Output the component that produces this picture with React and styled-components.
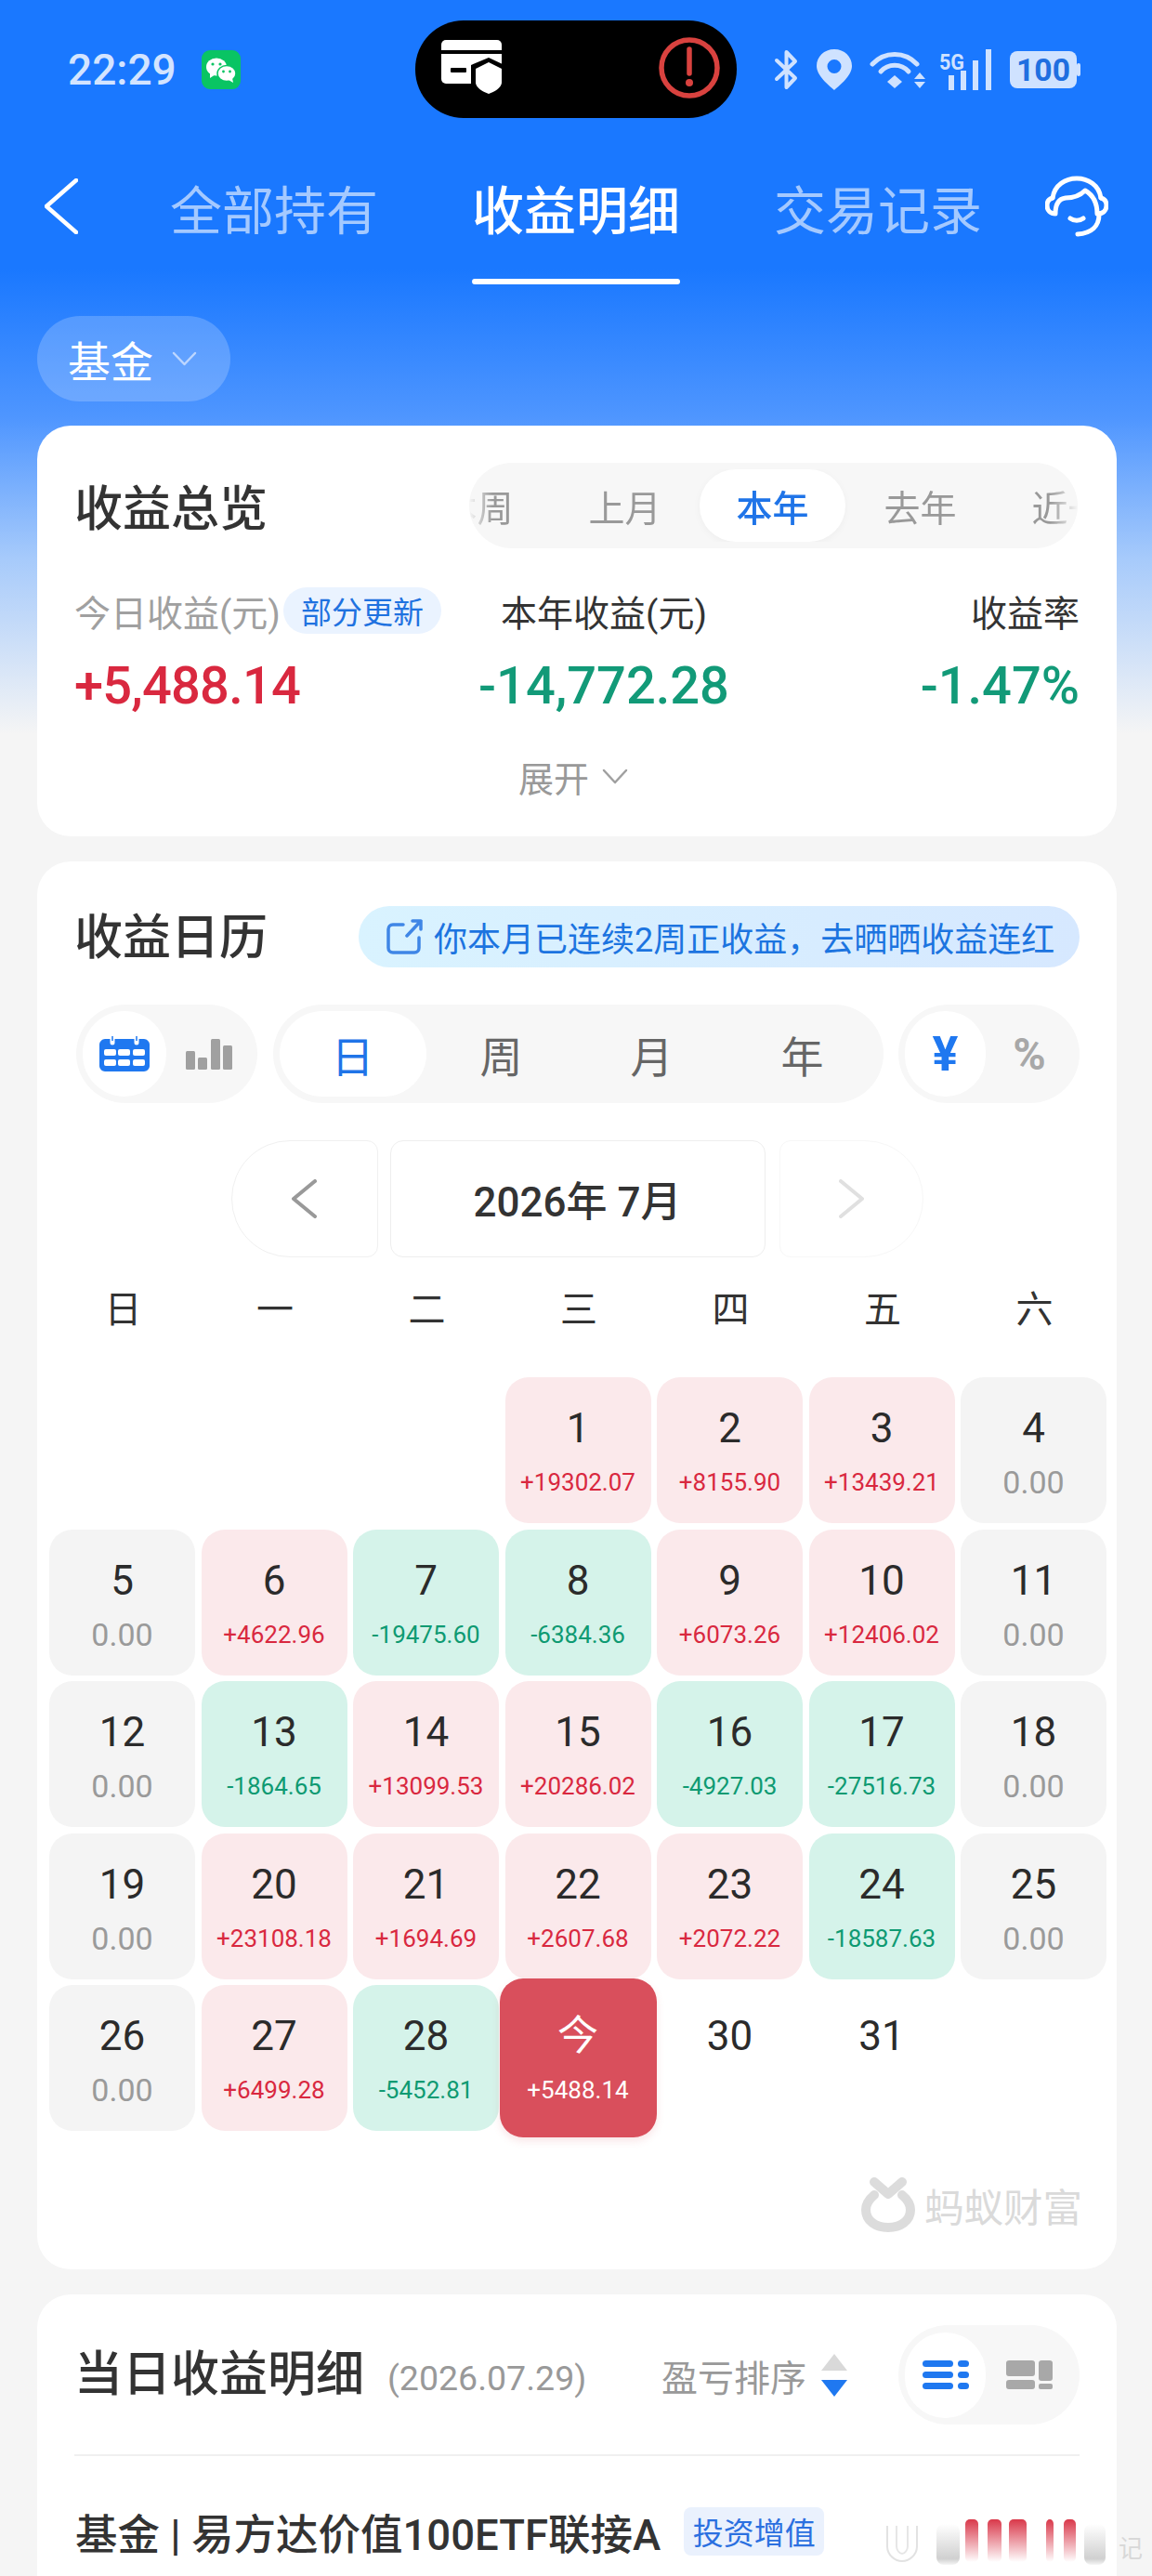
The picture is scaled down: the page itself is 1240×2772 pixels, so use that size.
import React from 'react'
import styled, { createGlobalStyle } from 'styled-components'

const GlobalStyle = createGlobalStyle`
  html, body { margin: 0; padding: 0; }
  body { font-family: Roboto, "Noto Sans CJK SC", sans-serif; color: #333; }
  * { box-sizing: border-box; }
`

const Page = styled.div`
  position: relative;
  display: flex;
  flex-direction: column;
  width: 1240px;
  height: 2772px;
  overflow: hidden;
  background: linear-gradient(180deg, #1a78ff 0, #1a78ff 290px, #4f96ff 450px, #a6cafb 600px, #f5f5f5 790px);
`

/* status bar */
const StatusBar = styled.div`
  display: grid;
  grid-template-columns: 447px 346px 1fr;
  align-items: center;
  height: 105px;
  margin-top: 22px;
`
const StatusLeft = styled.div`
  display: flex;
  align-items: center;
  gap: 27px;
  padding-left: 73px;
`
const Clock = styled.span`
  font-size: 46px;
  font-weight: 500;
  color: #d3e4ff;
  line-height: 1;
`
const Island = styled.div`
  display: flex;
  align-items: center;
  justify-content: space-between;
  height: 105px;
  padding: 0 18px 4px 28px;
  background: #000;
  border-radius: 52px;
`
const StatusRight = styled.div`
  display: flex;
  align-items: center;
  padding-left: 40px;
`
const StatusIcon = styled.svg`
  display: block;
  flex: none;
  margin-right: ${p => p.$gap || 0}px;
`

/* tabs */
const TabBar = styled.div`
  display: flex;
  align-items: stretch;
  height: 190px;
  padding-left: 48px;
`
const IconSlot = styled.div`
  display: flex;
  align-items: center;
  flex: none;
  width: ${p => p.$w}px;
  margin-left: ${p => p.$left || 0}px;
`
const TabRow = styled.div`
  display: flex;
  gap: 101px;
  margin-left: 99px;
`
const Tab = styled.div`
  position: relative;
  display: flex;
  align-items: center;
  font-size: 56px;
  font-weight: ${p => (p.$active ? 500 : 400)};
  color: ${p => (p.$active ? '#fff' : '#a4c9ff')};
  ${p => p.$active && `
    &::after {
      content: '';
      position: absolute;
      left: 0;
      right: 0;
      bottom: 11px;
      height: 6px;
      border-radius: 3px;
      background: #fff;
    }
  `}
`
const FilterPill = styled.div`
  display: flex;
  align-items: center;
  gap: 20px;
  width: 208px;
  height: 92px;
  margin: 23px 0 0 40px;
  padding-left: 33px;
  border-radius: 46px;
  background: rgba(255, 255, 255, 0.2);
  color: #fff;
  font-size: 46px;
`

/* cards */
const Card = styled.section`
  flex: ${p => (p.$fill ? 1 : 'none')};
  width: 1162px;
  margin: ${p => p.$top}px 0 0 40px;
  padding: ${p => p.$pad};
  background: #fff;
  border-radius: ${p => (p.$fill ? '36px 36px 0 0' : '36px')};
`
const CardHead = styled.div`
  display: flex;
  align-items: center;
  justify-content: space-between;
`
const CardTitle = styled.h2`
  margin: ${p => p.$drop || 0}px 0 0;
  font-size: 52px;
  line-height: 60px;
  font-weight: 500;
  color: #333;
  white-space: nowrap;
`

/* period slider */
const Period = styled.div`
  width: 655px;
  height: 92px;
  padding: 7px 0;
  background: #f7f7f7;
  border-radius: 46px;
  overflow: hidden;
  margin-right: 2px;
`
const PeriodTrack = styled.div`
  display: flex;
  margin-left: -71px;
  mask-image: linear-gradient(90deg, transparent 71px, #000 96px, #000 696px, transparent 726px);
`
const PeriodItem = styled.div`
  flex: none;
  display: flex;
  align-items: center;
  justify-content: center;
  width: ${p => p.$w || 157}px;
  height: 78px;
  margin: 0 1px;
  padding-left: ${p => p.$pl || 0}px;
  font-size: 39px;
  white-space: nowrap;
  color: ${p => (p.$active ? '#1f74e8' : '#999')};
  font-weight: ${p => (p.$active ? 500 : 400)};
  background: ${p => (p.$active ? '#fff' : 'transparent')};
  border-radius: 39px;
  ${p => p.$active && 'box-shadow: 0 2px 8px rgba(0, 0, 0, 0.04);'}
`

/* stats */
const Stats = styled.div`
  display: grid;
  grid-template-columns: 435px 270px 1fr;
  grid-template-rows: 50px 60px;
  row-gap: 26px;
  margin-top: 42px;
`
const StatLabel = styled.div`
  display: flex;
  align-items: center;
  justify-content: ${p => p.$align || 'flex-start'};
  font-size: 39px;
  color: ${p => p.$color || '#333'};
  white-space: nowrap;
`
const UpdateTag = styled.span`
  display: inline-flex;
  align-items: center;
  height: 50px;
  margin-left: 3px;
  padding: 0 19px;
  border-radius: 25px;
  background: #eaf3ff;
  color: #1f72e0;
  font-size: 33px;
`
const StatValue = styled.div`
  display: flex;
  align-items: center;
  justify-content: ${p => p.$align || 'flex-start'};
  font-size: 56px;
  font-weight: 500;
  letter-spacing: ${p => (p.$up ? '-0.8px' : '0')};
  color: ${p => (p.$up ? '#d9283f' : '#129a78')};
  white-space: nowrap;
`
const Expand = styled.div`
  display: flex;
  align-items: center;
  justify-content: center;
  gap: 14px;
  height: 50px;
  margin-top: 42px;
  padding-right: 8px;
  font-size: 38px;
  color: #999;
`

/* calendar card */
const ShareBanner = styled.div`
  display: flex;
  align-items: center;
  gap: 11px;
  width: 776px;
  height: 66px;
  padding-left: 30px;
  border-radius: 33px;
  background: linear-gradient(90deg, #d9f3ff, #d6e8ff);
  color: #1c74e0;
  font-size: 36px;
  white-space: nowrap;
  svg { flex: none; }
`
const Toolbar = styled.div`
  display: flex;
  justify-content: space-between;
  margin-top: 40px;
  padding-left: 2px;
`
const Toggle = styled.div`
  display: flex;
  align-items: center;
  flex: none;
  width: ${p => p.$w}px;
  height: ${p => p.$h || 106}px;
  padding: 0 7px;
  background: #f7f7f7;
  border-radius: 53px;
`
const ToggleItem = styled.div`
  display: flex;
  align-items: center;
  justify-content: center;
  flex: none;
  width: ${p => p.$w}px;
  height: 92px;
  font-size: ${p => p.$size || 46}px;
  font-weight: ${p => p.$weight || 400};
  color: ${p => p.$color || '#666'};
  background: ${p => (p.$active ? '#fff' : 'transparent')};
  border-radius: 46px;
`
const MonthNav = styled.div`
  display: flex;
  justify-content: center;
  margin-top: 40px;
`
const NavBtn = styled.div`
  display: flex;
  align-items: center;
  justify-content: center;
  width: ${p => p.$w}px;
  height: 126px;
  margin-left: ${p => p.$left || 0}px;
  border: 1.5px solid ${p => p.$line || '#eee'};
  border-radius: ${p => p.$radius};
  font-size: 44px;
  font-weight: 500;
  color: #333;
`
const WeekRow = styled.div`
  display: grid;
  grid-template-columns: repeat(7, 157px);
  column-gap: 6.5px;
  height: 40px;
  margin: 37px 0 0 -26px;
`
const WeekDay = styled.div`
  text-align: center;
  font-size: 40px;
  line-height: 40px;
  color: #333;
`
const DayGrid = styled.div`
  display: grid;
  grid-template-columns: repeat(7, 157px);
  grid-auto-rows: 157px;
  gap: 6.5px;
  margin: 52px 0 0 -27px;
`
const tones = {
  up: { bg: '#fbe9eb', fg: '#d9283f' },
  down: { bg: '#d5f3ea', fg: '#0e9a72' },
  zero: { bg: '#f4f4f4', fg: '#9a9a9a' },
  none: { bg: 'transparent', fg: '#9a9a9a' },
}
const DayCell = styled.div`
  display: flex;
  flex-direction: column;
  align-items: center;
  padding-top: 30px;
  border-radius: 25px;
  background: ${p => tones[p.$tone].bg};
`
const TodayCell = styled(DayCell)`
  margin: -7px -6px;
  padding-top: 37px;
  background: #d94f5c;
  box-shadow: 0 4px 8px rgba(217, 79, 92, 0.15);
`
const DayNum = styled.div`
  font-size: 44px;
  line-height: 50px;
  font-weight: 400;
  color: ${p => (p.$today ? '#fff' : '#2b2b2b')};
`
const DayAmount = styled.div`
  margin-top: 15px;
  font-size: ${p => (p.$zero ? 34 : 26)}px;
  line-height: 36px;
  white-space: nowrap;
  color: ${p => (p.$today ? '#fff' : tones[p.$tone].fg)};
`
const BrandRow = styled.div`
  display: flex;
  align-items: center;
  justify-content: flex-end;
  gap: 10px;
  height: 59px;
  margin: 50px -3px 0 0;
`
const BrandText = styled.span`
  font-size: 42.5px;
  color: #dadada;
  white-space: nowrap;
`

/* detail card */
const DetailHead = styled.div`
  display: flex;
  align-items: center;
`
const DetailDate = styled.span`
  margin: 6px 0 0 25px;
  font-size: 37.5px;
  color: #999;
`
const SortGroup = styled.div`
  display: flex;
  align-items: center;
  gap: 16px;
  margin: 0 55px 0 auto;
  font-size: 39px;
  color: #999;
  white-space: nowrap;
`
const Divider = styled.div`
  height: 2px;
  margin-top: 32px;
  background: #f0f0f0;
`
const FundRow = styled.div`
  display: flex;
  align-items: center;
  gap: 25px;
  margin-top: 48px;
  padding-left: 1px;
`
const FundName = styled.span`
  font-size: 45.5px;
  font-weight: 500;
  color: #333;
  white-space: nowrap;
`
const FundTag = styled.span`
  display: inline-flex;
  align-items: center;
  justify-content: center;
  width: 151px;
  height: 52px;
  border-radius: 8px;
  background: #eaf1fd;
  color: #2b70e0;
  font-size: 33px;
`
const Watermark = styled.div`
  position: absolute;
  left: 950px;
  top: 2700px;
  width: 290px;
  height: 72px;
`
const WatermarkChar = styled.span`
  position: absolute;
  left: 254px;
  top: 28px;
  font-size: 26px;
  line-height: 30px;
  color: #d8d8d8;
`

const Chevron = ({ w, h, color, stroke = 4, dir = 'down' }) => {
  const paths = {
    down: `M2 2 L${w / 2} ${h - 2} L${w - 2} 2`,
    left: `M${w - 2} 2 L2 ${h / 2} L${w - 2} ${h - 2}`,
    right: `M2 2 L${w - 2} ${h / 2} L2 ${h - 2}`,
  }
  return (
    <svg width={w} height={h} viewBox={`0 0 ${w} ${h}`} fill="none">
      <path d={paths[dir]} stroke={color} strokeWidth={stroke} strokeLinecap="round" strokeLinejoin="round" />
    </svg>
  )
}

const WeChatIcon = () => (
  <svg width="42" height="42" viewBox="0 0 42 42">
    <rect width="42" height="42" rx="9" fill="#09c463" />
    <ellipse cx="16" cy="18" rx="11" ry="9.5" fill="#fff" />
    <path d="M9 24 L9 30 L15 26 Z" fill="#fff" />
    <ellipse cx="27" cy="25" rx="10" ry="8.5" fill="#fff" stroke="#09c463" strokeWidth="1.5" />
    <path d="M33 30 L34 35 L29 32 Z" fill="#fff" />
    <circle cx="12" cy="15" r="1.6" fill="#09c463" />
    <circle cx="20" cy="15" r="1.6" fill="#09c463" />
    <circle cx="23.5" cy="23" r="1.4" fill="#09c463" />
    <circle cx="30.5" cy="23" r="1.4" fill="#09c463" />
  </svg>
)

const CardShieldIcon = () => (
  <svg width="68" height="60" viewBox="0 0 68 60">
    <rect x="0" y="0" width="65" height="47" rx="5" fill="#fff" />
    <rect x="0" y="11" width="65" height="4" fill="#000" />
    <rect x="10" y="30" width="17" height="5" rx="1" fill="#000" />
    <path d="M51 19 L68 27 L68 47 C68 54 58 60 51 62 C44 60 32 54 32 47 L32 27 Z" fill="#000" />
    <path d="M51 24 L65 31 L65 46 C65 51 57 56 51 58 C45 56 37 51 37 46 L37 31 Z" fill="#fff" />
  </svg>
)

const AlertIcon = () => (
  <svg width="66" height="68" viewBox="0 0 66 68">
    <circle cx="33" cy="34" r="30" fill="none" stroke="#d9423f" strokeWidth="5.5" />
    <path d="M33 14 L33 40" stroke="#d9423f" strokeWidth="5.5" strokeLinecap="round" />
    <circle cx="33" cy="50" r="4" fill="#d9423f" />
  </svg>
)

const BluetoothIcon = () => (
  <StatusIcon $gap={19} width="27" height="44" viewBox="0 0 27 44" fill="none">
    <path d="M3 12 L23 31 L13.5 41 L13.5 3 L23 13 L3 32" stroke="#cfe2ff" strokeWidth="4" strokeLinejoin="round" strokeLinecap="round" />
  </StatusIcon>
)

const PinIcon = () => (
  <StatusIcon $gap={19} width="38" height="44" viewBox="0 0 38 44">
    <path fillRule="evenodd" d="M19 0 C30 0 38 8 38 18 C38 28 26 38 19 44 C12 38 0 28 0 18 C0 8 8 0 19 0 Z M19 11 A7.5 7.5 0 1 0 19 26 A7.5 7.5 0 1 0 19 11 Z" fill="#cfe2ff" />
  </StatusIcon>
)

const WifiIcon = () => (
  <StatusIcon $gap={15} width="60" height="42" viewBox="0 0 60 42" fill="none">
    <path d="M3 15 C16 1 38 1 51 15" stroke="#cfe2ff" strokeWidth="5" strokeLinecap="round" />
    <path d="M12 23 C20 14 34 14 42 23" stroke="#cfe2ff" strokeWidth="5" strokeLinecap="round" />
    <path d="M27 27 L35 34 L27 41 L19 34 Z" fill="#cfe2ff" />
    <path d="M54 24 L60 31 L48 31 Z M48 34 L60 34 L54 41 Z" fill="#cfe2ff" />
  </StatusIcon>
)

const SignalIcon = () => (
  <StatusIcon $gap={19} width="57" height="44" viewBox="0 0 57 44">
    <text x="0" y="22" fontFamily="Roboto" fontWeight="700" fontSize="23" fill="#cfe2ff" textLength="27" lengthAdjust="spacingAndGlyphs">5G</text>
    <rect x="10" y="28" width="6" height="16" fill="#cfe2ff" />
    <rect x="23" y="23" width="6" height="21" fill="#cfe2ff" />
    <rect x="36" y="12" width="6" height="32" fill="#cfe2ff" />
    <rect x="50" y="0" width="6" height="44" fill="#cfe2ff" />
  </StatusIcon>
)

const BatteryIcon = () => (
  <StatusIcon width="76" height="40" viewBox="0 0 76 40">
    <rect x="0" y="0" width="72" height="40" rx="8" fill="#cfe2ff" />
    <rect x="72" y="13" width="4" height="14" rx="2" fill="#cfe2ff" />
    <text x="36" y="32" textAnchor="middle" fontFamily="Roboto" fontWeight="700" fontSize="33" fill="#1f6fe0" textLength="58" lengthAdjust="spacingAndGlyphs">100</text>
  </StatusIcon>
)

const HeadsetIcon = () => (
  <svg width="68" height="66" viewBox="0 0 68 66" fill="none" stroke="#fff" strokeWidth="5" strokeLinecap="round" strokeLinejoin="round">
    <path d="M8 24 C10 10 22 3 34 3 C46 3 58 10 60 24" />
    <path d="M8 24 C4 25 2 28 2 32 C2 38 6 41 11 41 C11 32 14 25 22 24 C30 24 37 22 43 16 C50 20 56 28 56 41 C62 41 66 38 66 32 C66 28 64 25 60 24" />
    <path d="M27 46 C31 49 37 49 41 46" />
    <path d="M58 42 C58 54 50 62 35 63" />
  </svg>
)

const ShareIcon = () => (
  <svg width="40" height="38" viewBox="0 0 40 38" fill="none" stroke="#3f86e6" strokeWidth="3.5" strokeLinecap="round" strokeLinejoin="round">
    <path d="M18 6 L7 6 C4 6 2 8 2 11 L2 31 C2 34 4 36 7 36 L30 36 C33 36 35 34 35 31 L35 20" />
    <path d="M22 18 L37 2 M28 2 L37 2 L37 11" />
  </svg>
)

const CalendarIcon = () => (
  <svg width="54" height="38" viewBox="0 0 54 38">
    <path d="M6 3 H48 C51 3 54 6 54 9 V32 C54 35 51 38 48 38 H6 C3 38 0 35 0 32 V9 C0 6 3 3 6 3 Z" fill="#1f78f0" />
    <path d="M14 0 V7 M40 0 V7" stroke="#fff" strokeWidth="5" strokeLinecap="round" />
    <path d="M14 0 V5 M40 0 V5" stroke="#1f78f0" strokeWidth="1.5" />
    {[5, 20, 36].map(x => (
      <g key={x}>
        <rect x={x} y="14" width="13" height="7" rx="2" fill="#fff" />
        <rect x={x} y="25" width="13" height="7" rx="2" fill="#fff" />
      </g>
    ))}
  </svg>
)

const BarsIcon = () => (
  <svg width="50" height="33" viewBox="0 0 50 33" fill="#a0a0a0">
    <rect x="0" y="13" width="10" height="20" rx="1.5" />
    <rect x="13" y="20" width="10" height="13" rx="1.5" />
    <rect x="27" y="0" width="10" height="33" rx="1.5" />
    <rect x="40" y="7" width="10" height="26" rx="1.5" />
  </svg>
)

const BrandMark = () => (
  <svg width="58" height="59" viewBox="0 0 58 59" fill="none" stroke="#dcdcdc" strokeWidth="10">
    <path d="M14 19 C8 24 5 30 5 35 C5 47 16 54 29 54 C42 54 53 47 53 35 C53 30 50 24 44 19" strokeLinecap="round" />
    <path d="M14 5 L29 18 L44 5" strokeLinecap="round" strokeLinejoin="round" />
  </svg>
)

const SortArrows = () => (
  <svg width="28" height="46" viewBox="0 0 28 46">
    <path d="M14 0 L28 18 L0 18 Z" fill="#d9d9d9" />
    <path d="M0 28 L28 28 L14 46 Z" fill="#1f78f0" />
  </svg>
)

const ListIcon = () => (
  <svg width="50" height="31" viewBox="0 0 50 31" fill="#1f78f0">
    {[0, 12, 24].map(y => (
      <g key={y}>
        <rect x="0" y={y} width="33" height="7" rx="3.5" />
        <rect x="38" y={y} width="12" height="7" rx="3.5" />
      </g>
    ))}
  </svg>
)

const BlocksIcon = () => (
  <svg width="50" height="31" viewBox="0 0 50 31" fill="#a8a8a8">
    <rect x="0" y="0" width="31" height="17" rx="3" />
    <rect x="0" y="21" width="31" height="10" rx="3" />
    <rect x="35" y="0" width="15" height="22" rx="3" />
    <rect x="35" y="25" width="15" height="6" rx="2" />
  </svg>
)

const WatermarkArt = () => {
  const red = [[89, 14], [113, 15], [136, 19], [176, 8], [195, 13]]
  const gray = [[58, 25], [217, 23]]
  return (
    <svg width="290" height="72" viewBox="0 0 290 72" fill="none">
      <defs>
        <linearGradient id="wmRed" x1="0" y1="0" x2="0" y2="1">
          <stop offset="0" stopColor="#d9384a" />
          <stop offset="1" stopColor="#d9384a" stopOpacity="0" />
        </linearGradient>
        <linearGradient id="wmGray" x1="0" y1="0" x2="0" y2="1">
          <stop offset="0" stopColor="#d0d0d0" stopOpacity="0" />
          <stop offset="0.85" stopColor="#d0d0d0" />
          <stop offset="1" stopColor="#d0d0d0" stopOpacity="0.2" />
        </linearGradient>
      </defs>
      <path d="M5 18 V40 C5 50 14 56 21 56 C28 56 37 50 37 40 V18" stroke="#e2e2e2" strokeWidth="2" />
      <path d="M15 18 V40 C15 44 18 48 21 48 C24 48 27 44 27 40 V18" stroke="#e6e6e6" strokeWidth="2" />
      {gray.map(([x, w]) => (
        <rect key={x} x={x} y="16" width={w} height="44" rx="8" fill="url(#wmGray)" />
      ))}
      {red.map(([x, w]) => (
        <rect key={x} x={x} y="11" width={w} height="46" rx="5" fill="url(#wmRed)" />
      ))}
    </svg>
  )
}

const weekDays = ['日', '一', '二', '三', '四', '五', '六']
const days = [
  null, null, null,
  [1, '+19302.07'], [2, '+8155.90'], [3, '+13439.21'], [4, '0.00'],
  [5, '0.00'], [6, '+4622.96'], [7, '-19475.60'], [8, '-6384.36'], [9, '+6073.26'], [10, '+12406.02'], [11, '0.00'],
  [12, '0.00'], [13, '-1864.65'], [14, '+13099.53'], [15, '+20286.02'], [16, '-4927.03'], [17, '-27516.73'], [18, '0.00'],
  [19, '0.00'], [20, '+23108.18'], [21, '+1694.69'], [22, '+2607.68'], [23, '+2072.22'], [24, '-18587.63'], [25, '0.00'],
  [26, '0.00'], [27, '+6499.28'], [28, '-5452.81'], ['今', '+5488.14', true], [30], [31],
]

const toneOf = amount => {
  if (!amount) return 'none'
  if (amount === '0.00') return 'zero'
  return amount[0] === '+' ? 'up' : 'down'
}

const Calendar = () => (
  <DayGrid>
    {days.map((day, i) => {
      if (!day) return <div key={i} />
      const [num, amount, today] = day
      const tone = toneOf(amount)
      const Cell = today ? TodayCell : DayCell
      return (
        <Cell key={i} $tone={tone}>
          <DayNum $today={today}>{num}</DayNum>
          {amount && (
            <DayAmount $today={today} $tone={tone} $zero={tone === 'zero'}>
              {amount}
            </DayAmount>
          )}
        </Cell>
      )
    })}
  </DayGrid>
)

const App = () => (
  <Page>
    <GlobalStyle />
    <StatusBar>
      <StatusLeft>
        <Clock>22:29</Clock>
        <WeChatIcon />
      </StatusLeft>
      <Island>
        <CardShieldIcon />
        <AlertIcon />
      </Island>
      <StatusRight>
        <BluetoothIcon />
        <PinIcon />
        <WifiIcon />
        <SignalIcon />
        <BatteryIcon />
      </StatusRight>
    </StatusBar>

    <TabBar>
      <IconSlot $w={36}>
        <Chevron w={36} h={60} color="#fff" stroke={4.5} dir="left" />
      </IconSlot>
      <TabRow>
        <Tab>全部持有</Tab>
        <Tab $active>收益明细</Tab>
        <Tab>交易记录</Tab>
      </TabRow>
      <IconSlot $w={68} $left={68}>
        <HeadsetIcon />
      </IconSlot>
    </TabBar>

    <FilterPill>
      基金
      <Chevron w={27} h={16} color="#bcd6ff" stroke={2.5} />
    </FilterPill>

    <Card $top={26} $pad="40px 40px 40px">
      <CardHead>
        <CardTitle $drop={10}>收益总览</CardTitle>
        <Period>
          <PeriodTrack>
            <PeriodItem>本周</PeriodItem>
            <PeriodItem>上月</PeriodItem>
            <PeriodItem $active>本年</PeriodItem>
            <PeriodItem>去年</PeriodItem>
            <PeriodItem $w={190} $pl={6}>近一年</PeriodItem>
          </PeriodTrack>
        </Period>
      </CardHead>
      <Stats>
        <StatLabel $color="#a0a0a0">
          今日收益(元)
          <UpdateTag>部分更新</UpdateTag>
        </StatLabel>
        <StatLabel $align="center">本年收益(元)</StatLabel>
        <StatLabel $align="flex-end">收益率</StatLabel>
        <StatValue $up>+5,488.14</StatValue>
        <StatValue $align="center">-14,772.28</StatValue>
        <StatValue $align="flex-end">-1.47%</StatValue>
      </Stats>
      <Expand>
        展开
        <Chevron w={28} h={17} color="#a0a0a0" stroke={2.5} />
      </Expand>
    </Card>

    <Card $top={27} $pad="48px 40px 40px">
      <CardHead>
        <CardTitle $drop={4}>收益日历</CardTitle>
        <ShareBanner>
          <ShareIcon />
          你本月已连续2周正收益，去晒晒收益连红
        </ShareBanner>
      </CardHead>
      <Toolbar>
        <Toggle $w={195}>
          <ToggleItem $w={90} $active><CalendarIcon /></ToggleItem>
          <ToggleItem $w={91}><BarsIcon /></ToggleItem>
        </Toggle>
        <Toggle $w={657}>
          <ToggleItem $w={158} $active $color="#1f74e8">日</ToggleItem>
          <ToggleItem $w={162}>周</ToggleItem>
          <ToggleItem $w={162}>月</ToggleItem>
          <ToggleItem $w={162}>年</ToggleItem>
        </Toggle>
        <Toggle $w={195}>
          <ToggleItem $w={87} $active $color="#1f78f0" $weight={700} $size={52}>¥</ToggleItem>
          <ToggleItem $w={94} $color="#a8a8a8" $weight={700} $size={48}>%</ToggleItem>
        </Toggle>
      </Toolbar>
      <MonthNav>
        <NavBtn $w={158} $radius="63px 12px 12px 63px" $line="#f0f0f0">
          <Chevron w={27} h={42} color="#999" stroke={4} dir="left" />
        </NavBtn>
        <NavBtn $w={404} $left={13} $radius="14px">2026年 7月</NavBtn>
        <NavBtn $w={155} $left={15} $radius="12px 63px 63px 12px" $line="#f7f7f7">
          <Chevron w={27} h={42} color="#e0e0e0" stroke={4} dir="right" />
        </NavBtn>
      </MonthNav>
      <WeekRow>
        {weekDays.map(d => (
          <WeekDay key={d}>{d}</WeekDay>
        ))}
      </WeekRow>
      <Calendar />
      <BrandRow>
        <BrandMark />
        <BrandText>蚂蚁财富</BrandText>
      </BrandRow>
    </Card>

    <Card $top={27} $fill $pad="33px 40px 0">
      <DetailHead>
        <CardTitle>当日收益明细</CardTitle>
        <DetailDate>(2026.07.29)</DetailDate>
        <SortGroup>
          盈亏排序
          <SortArrows />
        </SortGroup>
        <Toggle $w={195} $h={107}>
          <ToggleItem $w={87} $active><ListIcon /></ToggleItem>
          <ToggleItem $w={94}><BlocksIcon /></ToggleItem>
        </Toggle>
      </DetailHead>
      <Divider />
      <FundRow>
        <FundName>基金 | 易方达价值100ETF联接A</FundName>
        <FundTag>投资增值</FundTag>
      </FundRow>
    </Card>

    <Watermark>
      <WatermarkArt />
      <WatermarkChar>记</WatermarkChar>
    </Watermark>
  </Page>
)

export default App
